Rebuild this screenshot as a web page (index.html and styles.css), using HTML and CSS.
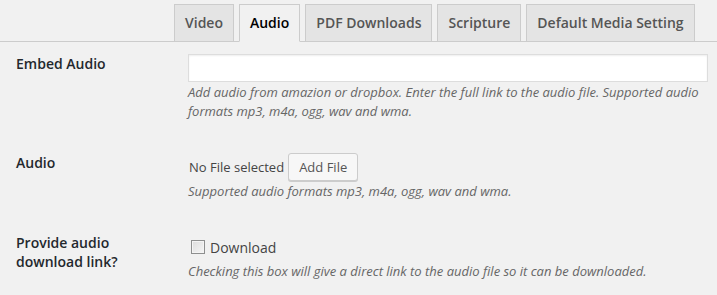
FILE: index.html
```html
<html>
<head>
<title>Sermon Media</title>
<meta name=viewport content="width=device-width, initial-scale=1.0">
<link rel="stylesheet" href="styles.css">
</head>
<body>
  <div class=tabs>
    <a class=tab>Video</a>
    <a class="tab active">Audio</a>
    <a class=tab>PDF Downloads</a>
    <a class=tab>Scripture</a>
    <a class=tab>Default Media Setting</a>
  </div>
  <div class=form>
    <div class=row>
      <label class=label>Embed Audio</label>
      <div class=field>
        <input class=text type=text>
        <p class=desc>Add audio from amazion or dropbox. Enter the full link to the audio file. Supported audio formats mp3, m4a, ogg, wav and wma.</p>
      </div>
    </div>
    <div class=row>
      <label class=label>Audio</label>
      <div class=field>
        <div class=upload>
          <span>No File selected</span>
          <button class=btn type=button>Add File</button>
        </div>
        <p class=desc>Supported audio formats mp3, m4a, ogg, wav and wma.</p>
      </div>
    </div>
    <div class=row>
      <label class=label>Provide audio download link?</label>
      <div class=field>
        <label class=check><input type=checkbox> Download</label>
        <p class=desc>Checking this box will give a direct link to the audio file so it can be downloaded.</p>
      </div>
    </div>
  </div>
</body>
</html>
```

FILE: styles.css
```css
* { box-sizing : border-box }

body, html {
  margin : 0;
  background : #F1F1F1;
  color : #444;
  font-family : "Open Sans", "Liberation Sans", sans-serif;
  font-size : 13px
}

.tabs {
  display : flex;
  padding : 4px 0 0 169px;
  border-bottom : 1px solid #CCC
}
.tab {
  margin : 0 0 -1px 5px;
  padding : 6px 10px;
  border : 1px solid #CCC;
  background : #E4E4E4;
  color : #555;
  font-size : 14px;
  font-weight : 600;
  line-height : 24px;
  white-space : nowrap
}
.tab.active {
  background : #F1F1F1;
  border-bottom-color : #F1F1F1;
  color : #000
}

.form {
  display : flex;
  flex-direction : column;
  gap : 32px;
  padding : 12px 9px 0 16px
}
.row {
  display : grid;
  grid-template-columns : 172px 1fr
}
.label {
  color : #23282D;
  font-size : 14px;
  font-weight : 600;
  line-height : 19px;
  padding-right : 30px
}

.text {
  display : block;
  width : 100%;
  height : 28px;
  margin : 0;
  border : 1px solid #DDD;
  background : #FFF;
  box-shadow : inset 0 1px 2px rgba(0, 0, 0, .07);
  outline : none
}
.desc {
  margin : 1px 0 0;
  color : #666;
  font-style : italic;
  line-height : 19px
}

.upload {
  display : flex;
  align-items : center;
  gap : 4px;
  padding-left : 1px
}
.btn {
  height : 28px;
  padding : 0 10px 1px;
  border : 1px solid #CCC;
  border-radius : 3px;
  background : #F7F7F7;
  box-shadow : 0 1px 0 #CCC;
  color : #555;
  font-family : inherit;
  font-size : 13px
}

.check {
  display : flex;
  align-items : center;
  gap : 5px;
  height : 28px;
  padding-left : 3px;
  font-size : 14px
}
.check input {
  appearance : none;
  -webkit-appearance : none;
  width : 14px;
  height : 14px;
  margin : 0;
  border : 1px solid #8E8F8F;
  background : linear-gradient(135deg, #DCDCDC, #F6F6F6);
  box-shadow : inset 0 0 0 1px #F4F4F4
}
```
